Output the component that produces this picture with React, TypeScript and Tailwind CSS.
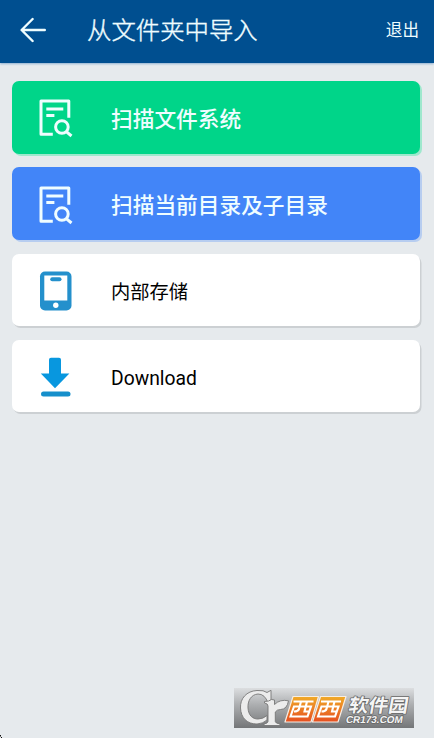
import type { ReactNode } from 'react';

function ScanIcon() {
  return (
    <svg width="34" height="40" viewBox="0 0 34 40" fill="none" stroke="#effdff" strokeWidth="3">
      <path d="M13.8 36.3H2V3H29.8V19.8" strokeLinejoin="round" />
      <path d="M7.3 11.1H24.3M7.3 17.4H15.4" />
      <circle cx="22.9" cy="29" r="6.3" />
      <path d="M27.3 33.6L32.5 38" />
    </svg>
  );
}

function PhoneIcon() {
  return (
    <svg width="34" height="40" viewBox="0 0 34 40">
      <rect x="1" y="0.5" width="31.5" height="39" rx="5" fill="#2490cc" />
      <rect x="5.3" y="4.5" width="23" height="25" fill="#fff" />
      <rect x="11.2" y="6.3" width="11.3" height="4" rx="2" fill="#2490cc" />
      <circle cx="16.8" cy="34.3" r="2.7" fill="#fff" />
    </svg>
  );
}

function DownloadIcon() {
  return (
    <svg width="34" height="40" viewBox="0 0 34 40" fill="#0897df">
      <path d="M12 0.8H20Q22 .8 22 2.8V16.5H30.4L16 31.3L1.8 16.5H10V2.8Q10 .8 12 .8Z" />
      <rect x="2" y="34.5" width="29.5" height="5" rx="2.5" fill="#168fcb" />
    </svg>
  );
}

function Row({ icon, label, card, text }: { icon: ReactNode; label: string; card: string; text: string }) {
  return (
    <div className={`flex h-[72.5px] items-center rounded-[7px] pl-[26.5px] ${card}`}>
      <div className="w-[72.5px] shrink-0 pt-[2px]">{icon}</div>
      <span className={`whitespace-nowrap ${text}`}>{label}</span>
    </div>
  );
}

function Watermark() {
  return (
    <svg width="180" height="40" viewBox="0 0 180 40" className="block">
      <defs>
        <linearGradient id="plate" x1="0" y1="0" x2="0" y2="1">
          <stop offset="0" stopColor="#dcdee0" />
          <stop offset=".4" stopColor="#aeb0b2" />
          <stop offset="1" stopColor="#747678" />
        </linearGradient>
        <linearGradient id="orange" x1="0" y1="0" x2="0" y2="1">
          <stop offset="0" stopColor="#f0ab28" />
          <stop offset="1" stopColor="#e64e20" />
        </linearGradient>
      </defs>
      <rect width="180" height="40" fill="url(#plate)" />
      <g fill="#ececec" stroke="#777" strokeWidth=".9" strokeLinejoin="round">
        <path d="M33 4.5L37 2.3V12L34 15Q31 6 24 6C17 6.5 13.5 13 14 20C14.5 27.5 18.5 31 24 31Q29 31 33 27.5V32Q29 35.7 23 36C13 36 7 30 6.5 20C6 10.5 12.5 3 23 2.5Q30 2 33 4.5Z" />
        <path d="M30.5 13.5Q35 13.5 37.5 11.5L40.5 12V16.5Q46 11 54.5 12.8Q53 21.5 46.5 21.5Q43 21.5 41.3 24V33.5Q41.3 35.3 46 36V37.5H30V36Q34 35.3 34 33.5V18Q34 15.5 30.5 15Z" />
      </g>
      <g stroke="#f8eee4" strokeWidth="1.2" strokeLinejoin="round">
        <path d="M59 8.5H84.5L77 34H51Z" fill="url(#orange)" />
        <path d="M86.5 8.5H112L104 34H78.5Z" fill="url(#orange)" />
      </g>
      <g fill="none" stroke="#fff" strokeWidth="2.1">
        <path d="M59.5 13.5H79.5M60 18.5H77L73.5 28.5H56.5ZM67 13.5L65 21Q64 23.5 60 23.5M73 13.5L70.5 23.5H74.5" />
        <path d="M87 13.5H107M87.5 18.5H104.5L101 28.5H84ZM94.5 13.5L92.5 21Q91.5 23.5 87.5 23.5M100.5 13.5L98 23.5H102" />
      </g>
      <g transform="skewX(-10)" fill="#f5f5f5" stroke="#686868" strokeWidth="1.6" paintOrder="stroke" strokeLinejoin="round">
        <text x="118" y="24" textLength="59.5" lengthAdjust="spacingAndGlyphs" className="font-['Noto_Sans_CJK_SC',sans-serif] text-[18.5px] font-bold">软件园</text>
        <text x="117.5" y="34.7" textLength="57" lengthAdjust="spacingAndGlyphs" className="font-['Liberation_Sans',sans-serif] text-[10px] font-bold">CR173.COM</text>
      </g>
    </svg>
  );
}

export default function App() {
  return (
    <div className="flex h-[738px] w-[434px] flex-col overflow-hidden bg-[#e6eaed] font-['Roboto','Noto_Sans_CJK_SC',sans-serif]">
      <header className="flex h-[63px] shrink-0 items-center bg-[#004f90] pr-[15px] pb-[3px] pl-5 text-[#effdff] [box-shadow:0_1px_2px_#8fb1d1]">
        <svg width="27" height="26" viewBox="0 0 27 26" fill="none" stroke="currentColor" strokeWidth="2.4" strokeLinecap="round" strokeLinejoin="round">
          <path d="M12.6 2L1.6 13L12.6 24M2 13H24.8" />
        </svg>
        <h1 className="ml-[40px] pt-[2px] text-[24.4px] font-light whitespace-nowrap [-webkit-text-stroke:0.4px_#effdff]">从文件夹中导入</h1>
        <span className="ml-auto pt-[3px] text-[16.6px] whitespace-nowrap">退出</span>
      </header>
      <main className="flex grow flex-col gap-[13.8px] pt-[18px] pr-[14px] pl-3">
        <Row icon={<ScanIcon />} label="扫描文件系统" card="bg-[#00d589] [box-shadow:2px_2px_0_#9ee8cd]" text="pt-[6px] text-[21.7px] font-medium text-[#effdff]" />
        <Row icon={<ScanIcon />} label="扫描当前目录及子目录" card="bg-[#4285f8] [box-shadow:2px_2px_0_#b7cdf0]" text="pt-[6px] text-[21.7px] font-medium text-[#effdff]" />
        <Row icon={<PhoneIcon />} label="内部存储" card="bg-white [box-shadow:1.5px_2px_0_#ccd0d3]" text="pt-[7px] text-[19.3px] text-black" />
        <Row icon={<DownloadIcon />} label="Download" card="bg-white [box-shadow:1.5px_2px_0_#ccd0d3]" text="pt-[6px] text-[19.3px] text-black" />
      </main>
      <footer className="flex shrink-0 items-end justify-between pr-5">
        <svg width="3" height="3" viewBox="0 0 3 3" className="block">
          <path d="M0 0H1V1H0ZM1 2H2V3H1Z" fill="#111" />
          <path d="M0 1H1V2H0Z" fill="#777" />
        </svg>
        <div className="pb-[10px]">
          <Watermark />
        </div>
      </footer>
    </div>
  );
}
